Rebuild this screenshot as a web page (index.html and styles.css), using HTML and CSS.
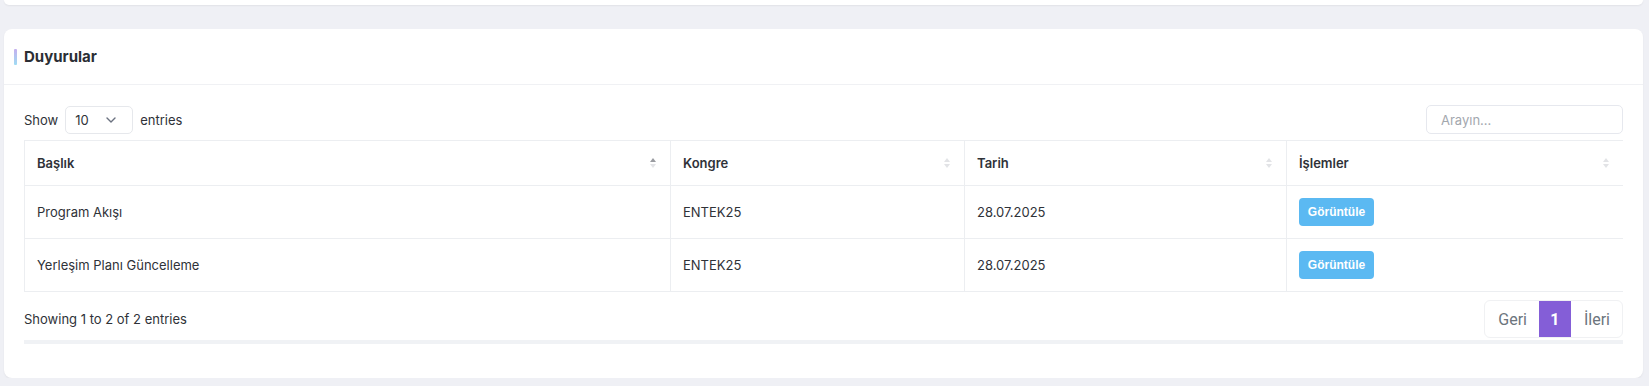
FILE: index.html
```html
<!DOCTYPE html>
<html>

<head>
  <meta charset="utf-8">
  <title>Duyurular</title>
  <link rel="stylesheet" href="styles.css">
</head>

<body>
  <div class="card card-top"></div>

  <div class="card">
    <div class="card-header">
      <span class="title-bar"></span>
      <h4 class="card-title">Duyurular</h4>
    </div>

    <div class="card-body">
      <div class="dt-top">
        <label class="dt-length">Show
          <span class="select">10
            <svg width="10" height="6" viewBox="0 0 10 6"><path d="M1 1l4 4 4-4" fill="none" stroke="#6b7280" stroke-width="1.4" stroke-linecap="round" stroke-linejoin="round"/></svg>
          </span>
          entries</label>
        <input class="dt-search" type="text" placeholder="Arayın...">
      </div>

      <div class="table-wrap">
        <table class="dt">
          <colgroup>
            <col style="width: 646px">
            <col style="width: 294px">
            <col style="width: 322px">
            <col>
          </colgroup>
          <thead>
            <tr>
              <th class="sorted">Başlık<span class="sort"></span></th>
              <th>Kongre<span class="sort"></span></th>
              <th>Tarih<span class="sort"></span></th>
              <th>İşlemler<span class="sort"></span></th>
            </tr>
          </thead>
          <tbody>
            <tr>
              <td>Program Akışı</td>
              <td>ENTEK25</td>
              <td>28.07.2025</td>
              <td><a class="btn-view" href="#">Görüntüle</a></td>
            </tr>
            <tr>
              <td>Yerleşim Planı Güncelleme</td>
              <td>ENTEK25</td>
              <td>28.07.2025</td>
              <td><a class="btn-view" href="#">Görüntüle</a></td>
            </tr>
          </tbody>
        </table>

        <div class="dt-bottom">
          <div class="dt-info">Showing 1 to 2 of 2 entries</div>
          <ul class="pagination">
            <li class="page">Geri</li>
            <li class="page active">1</li>
            <li class="page">İleri</li>
          </ul>
        </div>
        <div class="scroll-track"></div>
      </div>
    </div>
  </div>
</body>

</html>
```

FILE: styles.css
```css
html {
  --page-bg: #eff0f5;
  --border: #eceef1;
  --text: #2f3238;
  --purple: #845ed7;
  --sky: #5bb9f2;
}

body {
  margin: 0;
  padding: 0 6px 0 4px;
  background: var(--page-bg);
  font-family: Inter, "Noto Sans", sans-serif;
  font-size: 13px;
  color: var(--text);
}

.card {
  background: #fff;
  border-radius: 8px;
  box-shadow: 0 1px 2px rgba(0, 0, 0, 0.06);
}

.card-top {
  height: 5px;
  border-radius: 0 0 8px 8px;
  margin-bottom: 24px;
}

.card-header {
  display: flex;
  align-items: center;
  height: 56px;
  padding: 0 10px;
  border-bottom: 1px solid #f0f1f4;
  box-sizing: border-box;
}

.title-bar {
  width: 3px;
  height: 16px;
  margin-right: 7px;
  border-radius: 1px;
  background: linear-gradient(#c5b0ef, #9fdcf3);
}

.card-title {
  margin: 0;
  font-size: 15px;
  font-weight: 700;
  color: #2b2e34;
}

.card-body {
  padding: 20px 20px 34px;
}

.dt-top {
  display: flex;
  justify-content: space-between;
  align-items: center;
  margin-bottom: 6px;
}

.dt-length {
  display: flex;
  align-items: center;
  gap: 7px;
}

.select {
  display: flex;
  align-items: center;
  justify-content: space-between;
  width: 68px;
  height: 28px;
  padding: 0 16px 0 9px;
  box-sizing: border-box;
  border: 1px solid #e6e8ec;
  border-radius: 5px;
}

.dt-search {
  width: 197px;
  height: 29px;
  box-sizing: border-box;
  padding: 0 14px;
  border: 1px solid #e6e8ee;
  border-radius: 5px;
  font-family: inherit;
  font-size: 13px;
  outline: none;
}

.dt-search::placeholder {
  color: #a3a7ae;
}

.dt {
  width: 100%;
  border-collapse: collapse;
  table-layout: fixed;
}

.dt th,
.dt td {
  text-align: left;
  padding: 0 12px;
  border-top: 1px solid var(--border);
  border-bottom: 1px solid var(--border);
  border-left: 1px solid var(--border);
}

.dt th {
  position: relative;
  height: 44px;
  font-weight: 600;
  font-size: 13px;
}

.dt td {
  height: 52px;
}

.sort {
  position: absolute;
  right: 14px;
  top: 50%;
  margin-top: -5px;
  width: 6px;
  height: 10px;
}

.sort::before,
.sort::after {
  content: "";
  position: absolute;
  left: 0;
  border-left: 3px solid transparent;
  border-right: 3px solid transparent;
}

.sort::before {
  top: 0;
  border-bottom: 4px solid #e2e3e6;
}

.sort::after {
  bottom: 0;
  border-top: 4px solid #e2e3e6;
}

.sorted .sort::before {
  border-bottom-color: #9a9ca1;
}

.btn-view {
  display: inline-block;
  width: 75px;
  height: 28px;
  line-height: 28px;
  text-align: center;
  border-radius: 4px;
  background: var(--sky);
  color: #fff;
  font-family: "Liberation Sans", Arial, sans-serif;
  font-weight: 700;
  font-size: 12px;
  text-decoration: none;
}

.dt-bottom {
  display: flex;
  justify-content: space-between;
  align-items: center;
  padding-top: 8px;
}

.pagination {
  display: flex;
  margin: 0;
  padding: 0;
  list-style: none;
  height: 38px;
  border: 1px solid #f0f1f3;
  border-radius: 6px;
  overflow: hidden;
  box-sizing: border-box;
}

.page {
  display: flex;
  align-items: center;
  padding: 0 12px 0 13px;
  font-family: Roboto, sans-serif;
  font-size: 16px;
  color: #6c757d;
}

.page.active {
  justify-content: center;
  width: 32px;
  padding: 0;
  background: var(--purple);
  color: #fff;
  font-weight: 700;
}

.scroll-track {
  height: 4px;
  margin-top: 2px;
  background: #f0f2f5;
}
```
